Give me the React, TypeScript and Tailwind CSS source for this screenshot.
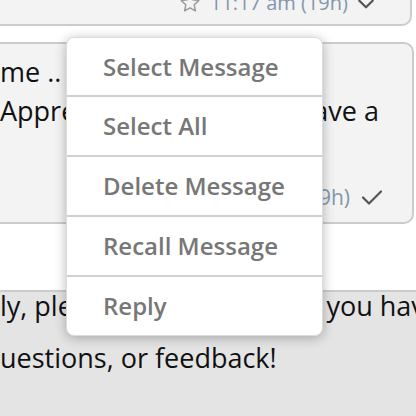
import React from "react";

const items = ["Select Message", "Select All", "Delete Message", "Recall Message", "Reply"];

export default function App() {
  return (
    <div
      className="relative w-[416px] h-[416px] overflow-hidden bg-white"
      style={{ fontFamily: '"Open Sans", "Noto Sans", sans-serif' }}
    >
      {/* top bubble */}
      <div className="w-[412px] h-[26px] bg-[#f3f3f3] border-b-2 border-r-2 border-[#cccccc] rounded-br-[10px] overflow-hidden">
        <div className="flex items-center h-[24px] -mt-[9px] pl-[179px] text-[20px] text-[#8297ad]">
          <svg width="22" height="22" viewBox="0 0 24 24" fill="none" stroke="#9a9a9a" strokeWidth="1.6" strokeLinejoin="round">
            <path d="M12 2.5l2.9 6.1 6.6.8-4.9 4.6 1.3 6.6L12 17.3l-5.9 3.3 1.3-6.6-4.9-4.6 6.6-.8z" />
          </svg>
          <span className="ml-[9px] leading-none">11:17 am (19h)</span>
          <svg className="ml-[8px] mt-[2px]" width="20" height="20" viewBox="0 0 24 24" fill="none" stroke="#555" strokeWidth="2.6" strokeLinecap="round" strokeLinejoin="round">
            <path d="M4 8l8 8 8-8" />
          </svg>
        </div>
      </div>

      {/* second bubble */}
      <div className="mt-[16px] -ml-[10px] w-[424px] h-[182px] bg-[#f3f3f3] border-2 border-[#cccccc] rounded-tr-[10px] rounded-br-[10px] text-[27px] text-[#111111]">
        <div className="pl-[8px] pt-[8px] leading-[39px]">
          <div>me ..</div>
          <div className="flex justify-between w-[379px]">
            <span>Appreciate it</span>
            <span>we have a</span>
          </div>
        </div>
        <div className="flex items-center justify-end w-[392px] mt-[55px] text-[21px] text-[#8297ad]">
          <span className="leading-none">(19h)</span>
          <svg className="ml-[10px]" width="24" height="24" viewBox="0 0 24 24" fill="none" stroke="#555" strokeWidth="2.2" strokeLinecap="round" strokeLinejoin="round">
            <path d="M3 12.5l6 6L21 6.5" />
          </svg>
        </div>
      </div>

      {/* bottom area */}
      <div className="mt-[66px] h-[140px] bg-[#e4e4e4] border-t-2 border-[#cccccc] text-[27px] text-[#111111]">
        <div className="-mt-[12px] leading-[52px]">
          <div className="flex justify-between w-[440px]">
            <span>ly, please let us</span>
            <span>you have</span>
          </div>
          <div>uestions, or feedback!</div>
        </div>
      </div>

      {/* context menu */}
      <div className="absolute left-[66px] top-[37px] w-[257px] bg-white border border-[#dcdcdc] rounded-[8px] shadow-[0_2px_12px_rgba(0,0,0,0.28)] overflow-hidden">
        {items.map((t, i) => (
          <div
            key={t}
            className={
              i === 0
                ? "h-[57px] flex items-center pl-[36px] text-[24px] font-semibold text-[#777777]"
                : "h-[60px] border-t-2 border-[#d0d0d0] flex items-center pl-[36px] text-[24px] font-semibold text-[#777777]"
            }
          >
            {t}
          </div>
        ))}
      </div>
    </div>
  );
}
